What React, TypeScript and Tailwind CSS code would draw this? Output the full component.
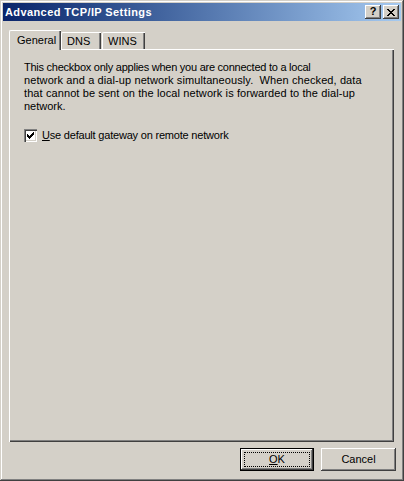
import React from 'react';

const font = { fontFamily: 'Tahoma, "Liberation Sans", Arial, sans-serif' };

const raised =
  'shadow-[inset_-1px_-1px_0_#404040,inset_1px_1px_0_#ffffff,inset_-2px_-2px_0_#808080,inset_2px_2px_0_#d4d0c8]';

const TitleButton: React.FC<{ children: React.ReactNode }> = ({ children }) => (
  <div className={`w-[16px] h-[14px] bg-[#d4d0c8] flex items-center justify-center ${raised}`}>
    {children}
  </div>
);

const Tab: React.FC<{ label: string; active?: boolean }> = ({ label, active }) =>
  active ? (
    <div className="relative z-10 h-[20px] w-[52px] -mb-px bg-[#d4d0c8] border-l border-t border-white rounded-tl-[2px] shadow-[inset_-1px_0_0_#404040,inset_-2px_0_0_#808080] flex items-start pl-[7px] pt-[3px] text-[11px] leading-[13px] text-black">
      {label}
    </div>
  ) : (
    <div className="h-[17px] bg-[#d4d0c8] border-l border-t border-white rounded-tl-[2px] shadow-[inset_-1px_0_0_#404040,inset_-2px_0_0_#808080] flex items-start pl-[5px] pt-[2px] text-[11px] leading-[13px] text-black">
      {label}
    </div>
  );

const App: React.FC = () => {
  return (
    <div
      style={font}
      className="w-[404px] h-[481px] bg-[#d4d0c8] p-[3px] flex flex-col shadow-[inset_-1px_-1px_0_#404040,inset_1px_1px_0_#d4d0c8,inset_-2px_-2px_0_#808080,inset_2px_2px_0_#ffffff] select-none"
    >
      {/* Title bar */}
      <div className="h-[18px] bg-gradient-to-r from-[#0a246a] to-[#a6caf0] flex items-center justify-between pl-[2px] pr-[2px]">
        <span className="text-white font-bold text-[11px] leading-[13px] tracking-[0.4px]">Advanced TCP/IP Settings</span>
        <div className="flex items-center gap-[2px]">
          <TitleButton>
            <span className="font-bold text-[11px] leading-none text-black -mt-[1px]">?</span>
          </TitleButton>
          <TitleButton>
            <svg width="8" height="7" viewBox="0 0 8 7">
              <path d="M0 0h2v1h-2zM6 0h2v1h-2zM1 1h2v1h-2zM5 1h2v1h-2zM2 2h4v1h-4zM3 3h2v1h-2zM2 4h4v1h-4zM1 5h2v1h-2zM5 5h2v1h-2zM0 6h2v1h-2zM6 6h2v1h-2z" fill="#000" />
            </svg>
          </TitleButton>
        </div>
      </div>

      {/* Tabs */}
      <div className="flex items-end ml-[6px] mt-[8px] h-[20px]">
        <Tab label="General" active />
        <div className="w-[40px]">
          <Tab label="DNS" />
        </div>
        <div className="w-[43px] ml-px">
          <Tab label="WINS" />
        </div>
      </div>

      {/* Panel */}
      <div className="ml-[6px] w-[385px] h-[393px] bg-[#d4d0c8] border-l border-t border-white shadow-[inset_-1px_-1px_0_#404040,inset_-2px_-2px_0_#808080] pl-[14px] pt-[11px] text-[11px] leading-[13px] text-black">
        <p className="whitespace-nowrap">
          <span className="tracking-[-0.25px]">This checkbox only applies when you are connected to a local</span>
          <br />
          <span className="tracking-[0.1px]">network and a dial-up network simultaneously.&nbsp; When checked, data</span>
          <br />
          <span className="tracking-[0.1px]">that cannot be sent on the local network is forwarded to the dial-up</span>
          <br />
          network.
        </p>
        <div className="flex items-center mt-[16px] h-[13px]">
          <div className="w-[13px] h-[13px] bg-white shadow-[inset_1px_1px_0_#808080,inset_2px_2px_0_#404040,inset_-1px_-1px_0_#ffffff,inset_-2px_-2px_0_#d4d0c8] flex items-center justify-center">
            <svg width="7" height="7" viewBox="0 0 7 7">
              <path d="M0 2h1v3h-1zM1 3h1v3h-1zM2 4h1v3h-1zM3 3h1v3h-1zM4 2h1v3h-1zM5 1h1v3h-1zM6 0h1v3h-1z" fill="#000" />
            </svg>
          </div>
          <span className="ml-[5px] tracking-[-0.2px]">
            <span className="underline underline-offset-[1px]">U</span>se default gateway on remote network
          </span>
        </div>
      </div>

      {/* Buttons */}
      <div className="flex justify-end gap-[7px] mt-[6px] pr-[5px]">
        <div className="w-[74px] h-[23px] border border-black bg-[#d4d0c8] shadow-[inset_-1px_-1px_0_#404040,inset_1px_1px_0_#ffffff,inset_-2px_-2px_0_#808080] p-[3px]">
          <div className="w-full h-full border border-dotted border-black flex items-center justify-center text-[11px] leading-[13px]">
            <span><span className="underline underline-offset-[1px]">O</span>K</span>
          </div>
        </div>
        <div className={`w-[75px] h-[23px] bg-[#d4d0c8] ${raised} flex items-center justify-center text-[11px] leading-[13px]`}>
          Cancel
        </div>
      </div>
    </div>
  );
};

export default App;
